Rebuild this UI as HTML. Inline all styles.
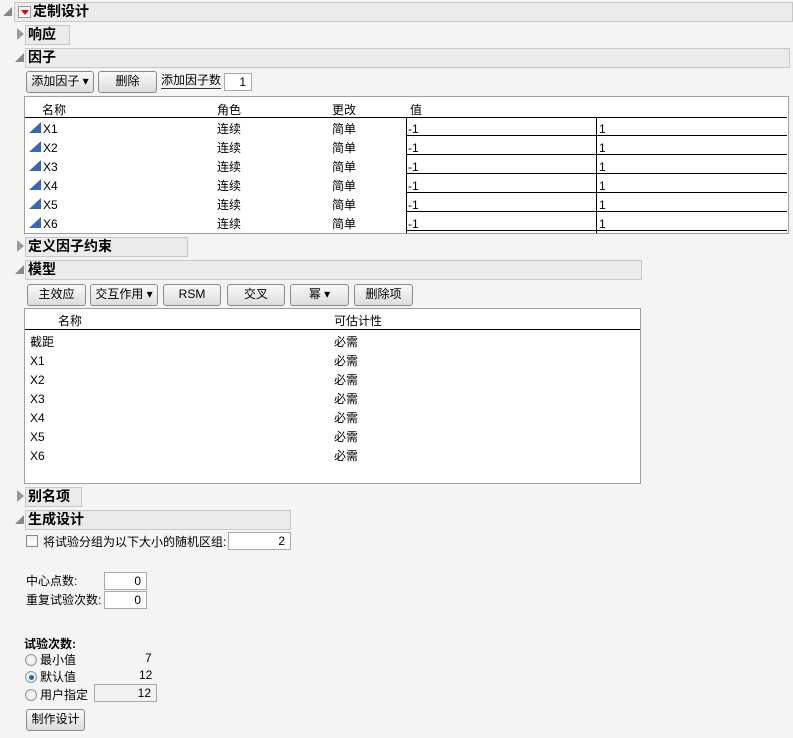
<!DOCTYPE html>
<html><head><meta charset="utf-8"><style>
*{box-sizing:border-box;margin:0;padding:0}
body{width:793px;height:738px;background:#f4f4f4;font-family:"Liberation Sans","Noto Sans CJK SC",sans-serif;font-size:12px;color:#000;position:relative;overflow:hidden}
.a{position:absolute}
.hdr{position:absolute;background:#ebebeb;border:1px solid #c8c8c8;font-weight:bold;font-size:14px;line-height:17px;padding-left:2px}
.tri{position:absolute;width:0;height:0}
.open{border-left:9px solid transparent;border-bottom:9px solid #888;}
.closed{border-top:6px solid transparent;border-bottom:6px solid transparent;border-left:7px solid #999}
.btn{position:absolute;height:22px;border:1px solid #8a8a8a;border-radius:3px;background:linear-gradient(#fafafa,#dcdcdc);text-align:center;line-height:19px;font-size:12px}
.inp{position:absolute;background:#fff;border:1px solid #a8a8a8;text-align:right;padding-right:5px;line-height:17px}
.tbl{position:absolute;background:#fff;border:1px solid #a0a0a0}
.t{position:absolute;white-space:nowrap}
.rad{position:absolute;width:12px;height:12px;border-radius:50%;border:1px solid #999;background:radial-gradient(#fff,#ddd)}
</style></head><body>
<div class="tri open" style="left:3px;top:7px"></div>
<div class="hdr" style="left:14px;top:2px;width:779px;height:20px;padding-left:18px">定制设计</div>
<div class="a" style="left:18px;top:6px;width:13px;height:12px;background:#fff;border:1px solid #999"></div>
<div class="tri" style="left:21px;top:10px;border-left:4px solid transparent;border-right:4px solid transparent;border-top:5px solid #d00"></div>

<div class="tri closed" style="left:17px;top:28px"></div>
<div class="hdr" style="left:25px;top:25px;width:45px;height:20px">响应</div>

<div class="tri open" style="left:15px;top:53px"></div>
<div class="hdr" style="left:25px;top:48px;width:765px;height:20px">因子</div>

<div class="btn" style="left:26px;top:71px;width:68px">添加因子 ▾</div>
<div class="btn" style="left:98px;top:71px;width:59px">删除</div>
<div class="t" style="left:161px;top:73px;border-bottom:1px solid #333;line-height:15px">添加因子数</div>
<div class="inp" style="left:224px;top:73px;width:28px;height:18px">1</div>

<div class="tbl" style="left:24px;top:96px;width:765px;height:138px"></div>
<div class="t" style="left:42px;top:101px">名称</div>
<div class="t" style="left:217px;top:101px">角色</div>
<div class="t" style="left:332px;top:101px">更改</div>
<div class="t" style="left:410px;top:101px">值</div>
<div class="a" style="left:25px;top:117px;width:762px;height:1px;background:#000"></div>
<div class="a" style="left:406px;top:118px;width:1px;height:115px;background:#000"></div>
<div class="a" style="left:596px;top:118px;width:1px;height:115px;background:#000"></div>
<div id="frows"></div>

<div class="tri closed" style="left:17px;top:240px"></div>
<div class="hdr" style="left:25px;top:237px;width:163px;height:20px">定义因子约束</div>
<div class="tri open" style="left:15px;top:265px"></div>
<div class="hdr" style="left:25px;top:260px;width:617px;height:20px">模型</div>

<div class="btn" style="left:27px;top:284px;width:59px">主效应</div>
<div class="btn" style="left:90px;top:284px;width:68px">交互作用 ▾</div>
<div class="btn" style="left:163px;top:284px;width:58px">RSM</div>
<div class="btn" style="left:227px;top:284px;width:58px">交叉</div>
<div class="btn" style="left:290px;top:284px;width:59px">幂 ▾</div>
<div class="btn" style="left:354px;top:284px;width:59px">删除项</div>

<div class="tbl" style="left:24px;top:308px;width:617px;height:176px"></div>
<div class="t" style="left:58px;top:312px">名称</div>
<div class="t" style="left:334px;top:312px">可估计性</div>
<div class="a" style="left:25px;top:329px;width:615px;height:1px;background:#000"></div>
<div id="mrows"></div>

<div class="tri closed" style="left:17px;top:490px"></div>
<div class="hdr" style="left:25px;top:487px;width:57px;height:20px">别名项</div>
<div class="tri open" style="left:15px;top:515px"></div>
<div class="hdr" style="left:25px;top:510px;width:266px;height:20px">生成设计</div>

<div class="a" style="left:26px;top:535px;width:12px;height:12px;border:1px solid #888;background:linear-gradient(#eee,#fff)"></div>
<div class="t" style="left:43px;top:533px">将试验分组为以下大小的随机区组:</div>
<div class="inp" style="left:228px;top:532px;width:63px;height:18px">2</div>

<div class="t" style="left:26px;top:572px">中心点数:</div>
<div class="inp" style="left:104px;top:572px;width:43px;height:18px">0</div>
<div class="t" style="left:26px;top:591px">重复试验次数:</div>
<div class="inp" style="left:104px;top:591px;width:43px;height:18px">0</div>

<div class="t" style="left:24px;top:635px;font-weight:bold">试验次数:</div>
<div class="rad" style="left:25px;top:654px"></div><div class="t" style="left:40px;top:651px">最小值</div><div class="t" style="left:145px;top:651px">7</div>
<div class="rad" style="left:25px;top:671px"></div><div class="a" style="left:29px;top:675px;width:5px;height:5px;border-radius:50%;background:#1a6fb0"></div><div class="t" style="left:40px;top:668px">默认值</div><div class="t" style="left:139px;top:668px">12</div>
<div class="rad" style="left:25px;top:689px"></div><div class="t" style="left:40px;top:686px">用户指定</div>
<div class="inp" style="left:94px;top:684px;width:63px;height:18px;background:#f2f2f2">12</div>
<div class="btn" style="left:26px;top:709px;width:59px">制作设计</div>

<script>
var f='',m='';
for(var i=0;i<6;i++){var y=118+i*19;
f+='<svg class="a" style="left:29px;top:'+(y+4)+'px" width="13" height="12"><path d="M0 11 L12 0 L12 11 Z" fill="#3a66b8"/></svg>';
f+='<div class="t" style="left:43px;top:'+(y+4)+'px">X'+(i+1)+'</div><div class="t" style="left:217px;top:'+(y+2)+'px">连续</div><div class="t" style="left:332px;top:'+(y+2)+'px">简单</div><div class="t" style="left:408px;top:'+(y+4)+'px">-1</div><div class="t" style="left:599px;top:'+(y+4)+'px">1</div>';
f+='<div class="a" style="left:406px;top:'+(y+17)+'px;width:381px;height:1px;background:#000"></div>';}
var names=['截距','X1','X2','X3','X4','X5','X6'];
for(var i=0;i<7;i++){var y=333+i*19;m+='<div class="t" style="left:30px;top:'+(i?y+2:y)+'px">'+names[i]+'</div><div class="t" style="left:334px;top:'+y+'px">必需</div>';}
document.getElementById('frows').innerHTML=f;document.getElementById('mrows').innerHTML=m;
</script>
</body></html>
